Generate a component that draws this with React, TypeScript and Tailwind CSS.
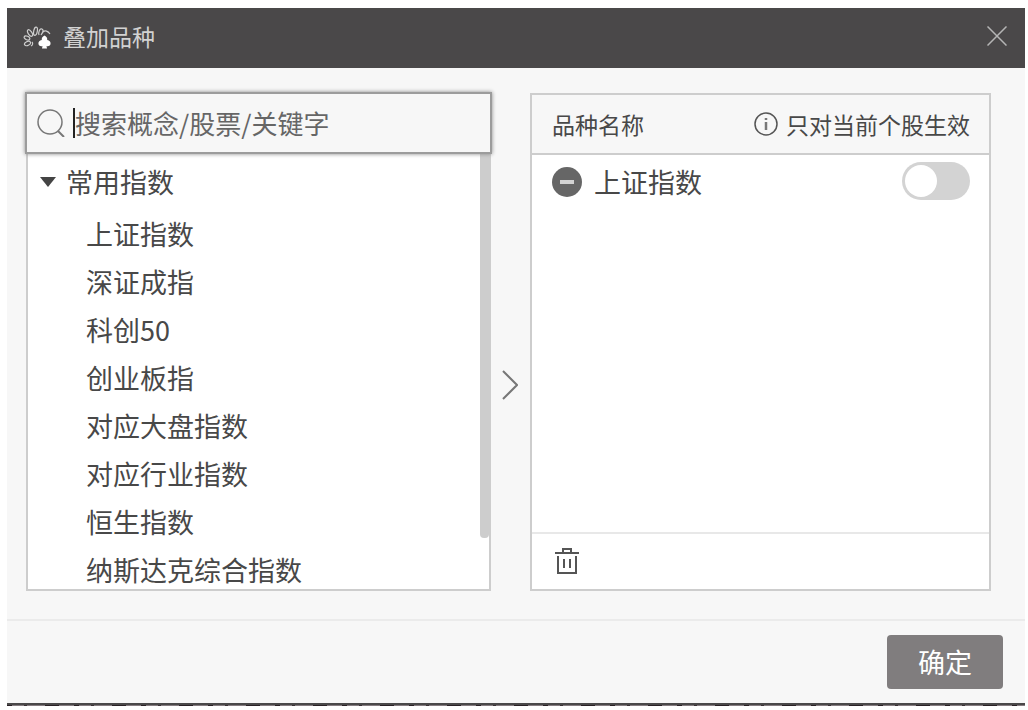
import React, { useState } from 'react';

const indices = ['上证指数', '深证成指', '科创50', '创业板指', '对应大盘指数', '对应行业指数', '恒生指数', '纳斯达克综合指数'];

function AppLogo() {
  return (
    <svg className="h-6 w-7" viewBox="0 0 28 24" fill="none" stroke="#cfcfcf" strokeWidth="1.2" aria-hidden="true">
      <ellipse cx="4.5" cy="17.5" rx="3.2" ry="2" transform="rotate(-25 4.5 17.5)" />
      <ellipse cx="4" cy="12" rx="3" ry="1.8" transform="rotate(20 4 12)" />
      <ellipse cx="7" cy="7" rx="3.8" ry="1.8" transform="rotate(55 7 7)" />
      <ellipse cx="12.5" cy="5.2" rx="4.2" ry="1.8" transform="rotate(100 12.5 5.2)" />
      <path d="M16 9c-1-3 1-7 3-6s1 3-1 6M20 6c2-2 5-1 7 2M8 20c2-1 2-3 1-4" />
      <path d="M21.500 9.500c2.300 1 3 3 2.700 4.500 2.500.5 3.800 2 3.300 4.300-.5 1.700-2.300 2.200-4 1.700l.5 2.500h-5l.5-2.500c-1.700.5-3.500 0-4-1.700-.5-2.300.8-3.800 3.300-4.300-.3-1.500.4-3.500 2.700-4.500Z" fill="#fff" stroke="none" />
    </svg>
  );
}

export default function App() {
  const [on, setOn] = useState(false);
  const [open, setOpen] = useState(true);
  return (
    <div className="min-h-screen bg-white pt-2 pr-[3px] pl-[7px] font-['Noto_Sans_CJK_SC','Noto_Sans',sans-serif] text-[#484848]">
      <main className="border-b-2 border-[#4a4849] bg-[#f7f7f7]">
        <header className="flex h-15 items-center gap-3 bg-[#4a4849] px-4">
          <AppLogo />
          <h1 className="flex-1 pb-1 text-[23px] leading-8 text-[#d2d2d2]">叠加品种</h1>
          <button aria-label="关闭" className="p-0.5 pb-1.5">
            <svg className="size-5" viewBox="0 0 20 20" stroke="#b5b5b5" strokeWidth="1.5" aria-hidden="true">
              <path d="M0.5 0.5l19 19M19.5 0.5l-19 19" />
            </svg>
          </button>
        </header>
        <div className="flex pt-6 pr-[34px] pb-7 pl-[18px]">
          <section className="min-w-0 flex-1">
            <label className="relative flex h-[62px] items-center border-2 border-[#9c9c9c] bg-[#f7f7f7] pl-2.5 shadow-[0_0_4px_#888]">
              <svg className="size-7 shrink-0" viewBox="0 0 28 28" fill="none" stroke="#777" strokeWidth="1.5" aria-hidden="true">
                <circle cx="13" cy="13" r="12" />
                <path d="M21 22l6 6" strokeWidth="2" />
              </svg>
              <span className="ml-2 h-[30px] w-0.5 shrink-0 bg-[#222]" />
              <input aria-label="搜索" placeholder="搜索概念/股票/关键字" className="min-w-0 flex-1 bg-transparent text-[26px] leading-9 text-[#555] outline-none placeholder:text-[#666]" />
            </label>
            <div className="mx-px flex h-[437px] overflow-hidden border-2 border-t-0 border-[#cdcdcd] bg-white">
              <div className="min-w-0 flex-1 pt-2 pl-3">
                <button className="flex h-10 items-center gap-2.5" aria-expanded={open} onClick={() => setOpen(!open)}>
                  <svg className="h-2.5 w-4" viewBox="0 0 16 10" fill="#444" aria-hidden="true"><path d="M0 0h16L8 10z" /></svg>
                  <span className="text-[27px] leading-10">常用指数</span>
                </button>
                {open && (
                  <ul className="pt-2 pl-[46px] text-[27px]">
                    {indices.map((n) => <li key={n} className="h-12 leading-[48px]">{n}</li>)}
                  </ul>
                )}
              </div>
              <div className="h-[384px] w-[9px] rounded-b bg-[#cdcdcd]" />
            </div>
          </section>
          <button aria-label="添加" className="flex w-[38px] items-center justify-center pt-[86px] pr-0.5">
            <svg className="h-[30px] w-4" viewBox="0 0 16 30" fill="none" stroke="#777" strokeWidth="2" aria-hidden="true"><path d="M1 1l14 14L1 29" /></svg>
          </button>
          <section className="mt-px flex w-[461px] flex-col border-2 border-[#cdcdcd] bg-white">
            <div className="flex h-[60px] items-center justify-between border-b-2 border-[#cdcdcd] bg-[#f7f7f7] pr-[19px] pl-5 text-[23px] leading-8">
              <h2>品种名称</h2>
              <p className="flex items-center gap-2">
                <svg className="size-6" viewBox="0 0 24 24" fill="none" stroke="#555" strokeWidth="1.5" aria-hidden="true">
                  <circle cx="12" cy="12" r="11" />
                  <path d="M12 10v8M12 6v2" strokeWidth="2.5" stroke="#777" />
                </svg>
                只对当前个股生效
              </p>
            </div>
            <div className="flex h-[53px] items-center pr-[19px] pl-5">
              <button aria-label="移除 上证指数">
                <svg className="size-[30px]" viewBox="0 0 30 30" aria-hidden="true"><circle cx="15" cy="15" r="15" fill="#666" /><path d="M8 15h14" stroke="#d2d2d2" strokeWidth="4" /></svg>
              </button>
              <span className="ml-3 flex-1 text-[27px] leading-10">上证指数</span>
              <label className="flex cursor-pointer pb-0.5">
                <input type="checkbox" role="switch" aria-label="显示 上证指数" checked={on} onChange={() => setOn(!on)} className="peer sr-only" />
                <span className="flex h-[38px] w-[68px] items-center rounded-full bg-[#d3d3d3] px-[3px] peer-checked:justify-end">
                  <span className="size-8 rounded-full bg-white" />
                </span>
              </label>
            </div>
            <div className="mt-auto flex h-[57px] items-center border-t-2 border-[#e8e8e8] pb-0.5 pl-[23px]">
              <button aria-label="删除">
                <svg className="h-[26px] w-6" viewBox="0 0 24 26" fill="none" stroke="#555" strokeWidth="2" aria-hidden="true">
                  <path d="M0 5h24M8 5V1h8v4M3 8v17h18V8M9 11v9M15 11v9" />
                </svg>
              </button>
            </div>
          </section>
        </div>
        <footer className="flex justify-end border-t-2 border-[#ebebeb] pt-3.5 pr-[22px] pb-3.5">
          <button className="h-[54px] w-[116px] rounded bg-[#807d7e] text-[27px] leading-10 text-white">确定</button>
        </footer>
      </main>
      <div className="h-px bg-[repeating-linear-gradient(90deg,#2a2226_0_5px,#857c80_5px_17px,#3a3236_17px_20px,#857c80_20px_38px,#2a2226_38px_52px,#857c80_52px_67px)]" />
    </div>
  );
}
